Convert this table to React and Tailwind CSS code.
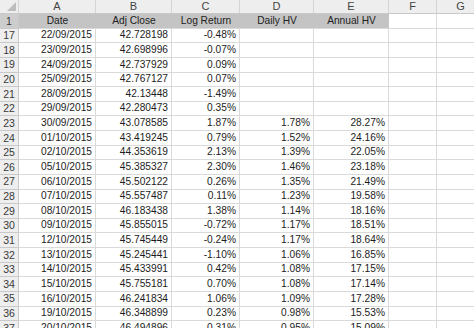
import React from 'react';

const cols = ['A', 'B', 'C', 'D', 'E', 'F', 'G'];
const widths = ['w-[77px]', 'w-[76px]', 'w-[68px]', 'w-[74px]', 'w-[75px]', 'w-[48px]', 'w-[48px]'];

const rows = [
  [17, '22/09/2015', '42.728198', '-0.48%', '', ''],
  [18, '23/09/2015', '42.698996', '-0.07%', '', ''],
  [19, '24/09/2015', '42.737929', '0.09%', '', ''],
  [20, '25/09/2015', '42.767127', '0.07%', '', ''],
  [21, '28/09/2015', '42.13448', '-1.49%', '', ''],
  [22, '29/09/2015', '42.280473', '0.35%', '', ''],
  [23, '30/09/2015', '43.078585', '1.87%', '1.78%', '28.27%'],
  [24, '01/10/2015', '43.419245', '0.79%', '1.52%', '24.16%'],
  [25, '02/10/2015', '44.353619', '2.13%', '1.39%', '22.05%'],
  [26, '05/10/2015', '45.385327', '2.30%', '1.46%', '23.18%'],
  [27, '06/10/2015', '45.502122', '0.26%', '1.35%', '21.49%'],
  [28, '07/10/2015', '45.557487', '0.11%', '1.23%', '19.58%'],
  [29, '08/10/2015', '46.183438', '1.38%', '1.14%', '18.16%'],
  [30, '09/10/2015', '45.855015', '-0.72%', '1.17%', '18.51%'],
  [31, '12/10/2015', '45.745449', '-0.24%', '1.17%', '18.64%'],
  [32, '13/10/2015', '45.245441', '-1.10%', '1.06%', '16.85%'],
  [33, '14/10/2015', '45.433991', '0.42%', '1.08%', '17.15%'],
  [34, '15/10/2015', '45.755181', '0.70%', '1.08%', '17.14%'],
  [35, '16/10/2015', '46.241834', '1.06%', '1.09%', '17.28%'],
  [36, '19/10/2015', '46.348899', '0.23%', '0.98%', '15.53%'],
  [37, '20/10/2015', '46.494896', '0.31%', '0.95%', '15.09%'],
];

const RowHead = ({ children, dark }) => (
  <div
    className={`w-[19px] shrink-0 h-full flex items-center justify-center border-r border-b border-[#c9c9c9] text-[10.5px] text-[#3a3a3a] ${
      dark ? 'bg-[#cdcdcd]' : 'bg-[#eeeeee]'
    }`}
  >
    {children}
  </div>
);

const App = () => {
  return (
    <div
      className="w-[474px] h-[328px] overflow-hidden bg-white text-[10.2px] leading-none text-[#1c1c1c]"
      style={{ fontFamily: '"Liberation Sans", Arial, sans-serif' }}
    >
      {/* column letters */}
      <div className="flex h-[14px] bg-[#eeeeee] border-b border-[#c9c9c9]">
        <div className="w-[19px] shrink-0 h-full border-r border-[#d4d4d4] flex items-end justify-end p-[2px]">
          <div className="w-0 h-0 border-l-[9px] border-l-transparent border-b-[9px] border-b-[#bdbdbd]" />
        </div>
        {cols.map((c, i) => (
          <div
            key={c}
            className={`${widths[i]} shrink-0 h-full flex items-center justify-center border-r border-[#d4d4d4] text-[11px] text-[#444]`}
          >
            {c}
          </div>
        ))}
      </div>

      {/* header row 1 */}
      <div className="flex h-[14.63px]">
        <RowHead dark>1</RowHead>
        <div className="flex h-full bg-[#c4c4c4] border-b border-[#d9d9d9] text-[#222]">
          {['Date', 'Adj Close', 'Log Return', 'Daily HV', 'Annual HV'].map((h, i) => (
            <div key={h} className={`${widths[i]} shrink-0 h-full flex items-center justify-center`}>
              {h}
            </div>
          ))}
        </div>
        <div className="w-[48px] shrink-0 h-full border-r border-b border-[#dadada]" />
        <div className="w-[48px] shrink-0 h-full border-r border-b border-[#dadada]" />
      </div>

      {rows.map((r) => (
        <div key={r[0]} className="flex h-[14.63px]">
          <RowHead>{r[0]}</RowHead>
          {[1, 2, 3, 4, 5, 6, 7].map((k, i) => (
            <div
              key={k}
              className={`${widths[i]} shrink-0 h-full flex items-center justify-end pr-[3px] border-r border-b border-[#dadada]`}
            >
              {r[k] || ''}
            </div>
          ))}
        </div>
      ))}
    </div>
  );
};

export default App;
